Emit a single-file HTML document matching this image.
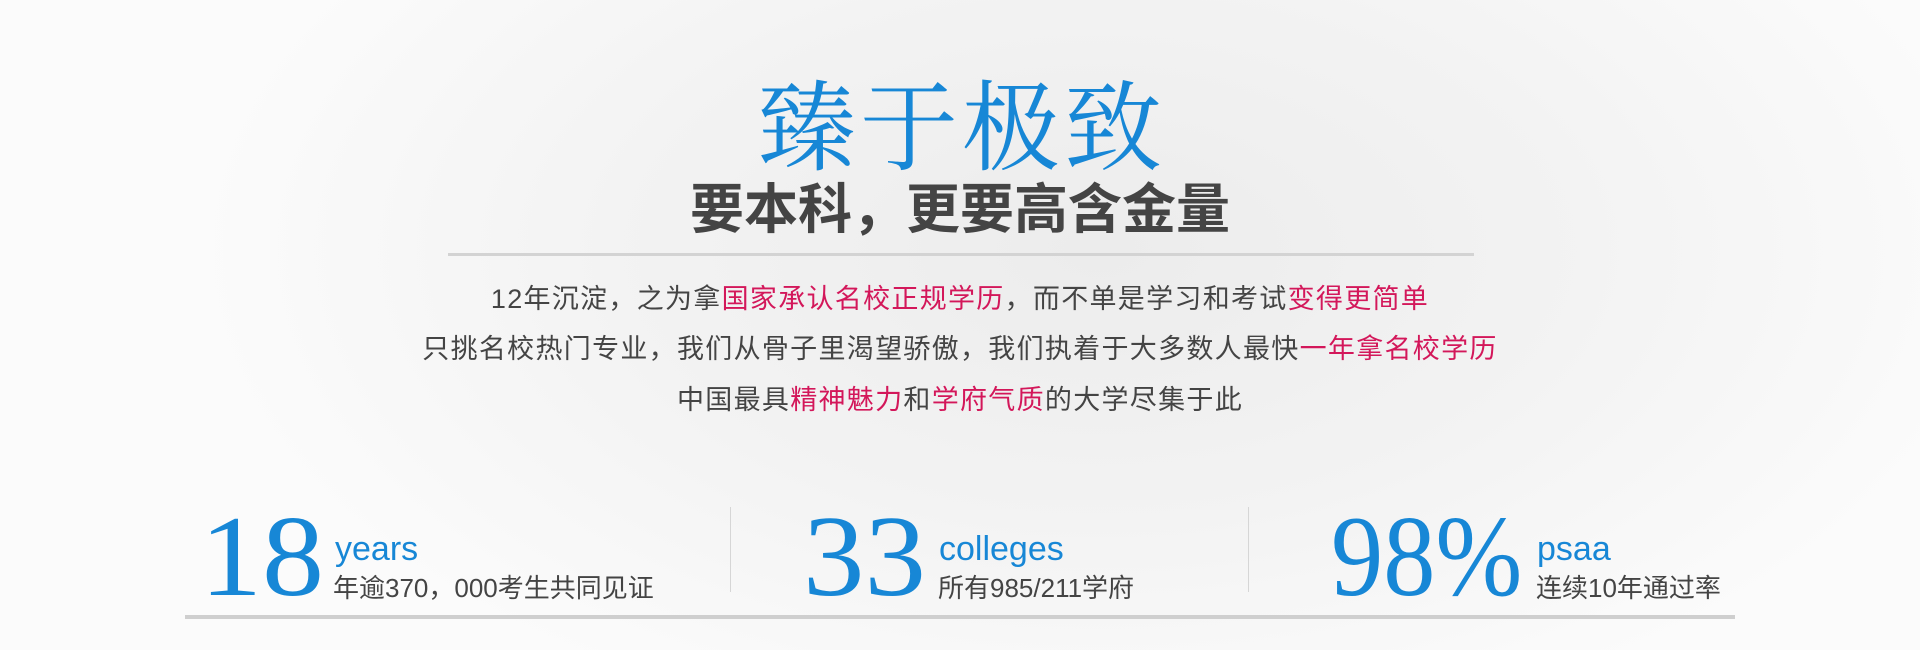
<!DOCTYPE html>
<html><head><meta charset="utf-8"><style>
html,body{margin:0;padding:0}
body{width:1920px;height:650px;position:relative;overflow:hidden;
background:radial-gradient(ellipse 900px 500px at 1100px 250px,#ececec 0%,#f3f3f3 55%,#fbfbfb 100%);
font-family:"Liberation Sans","Noto Sans CJK SC",sans-serif}
.a{position:absolute;white-space:nowrap}
.title{left:0;width:1920px;text-align:center;top:80px;font:98px/100px "Liberation Serif","Noto Serif CJK SC",serif;color:#1787d6;letter-spacing:4px;padding-left:4px;box-sizing:border-box}
.sub{left:0;width:1920px;text-align:center;top:182px;font-weight:bold;font-size:54px;line-height:56px;color:#444}
.hr{left:448px;width:1026px;top:253px;height:3px;background:#d3d3d3}
.txt{left:0;width:1920px;text-align:center;font-size:27px;line-height:30px;color:#444;letter-spacing:1.3px}
.r{color:#d3175a}
.num{font:116px/116px "Liberation Serif",serif;color:#1787d6;top:499px;transform-origin:left top}
.lab{font-size:34px;line-height:34px;color:#1787d6;top:532px}
.cn{font-size:26px;line-height:26px;color:#444;top:575px}
.sep{width:1px;background:#d6d6d6;top:507px;height:85px}
.bot{left:185px;width:1550px;top:615px;height:4px;background:#cfcfcf}
</style></head><body>
<div class="a title">臻于极致</div>
<div class="a sub">要本科，更要高含金量</div>
<div class="a hr"></div>
<div class="a txt" style="top:284px">12年沉淀，之为拿<span class="r">国家承认名校正规学历</span>，而不单是学习和考试<span class="r">变得更简单</span></div>
<div class="a txt" style="top:334px">只挑名校热门专业，我们从骨子里渴望骄傲，我们执着于大多数人最快<span class="r">一年拿名校学历</span></div>
<div class="a txt" style="top:385px">中国最具<span class="r">精神魅力</span>和<span class="r">学府气质</span>的大学尽集于此</div>

<div class="a num" style="left:200px;transform:scaleX(1.07)">18</div>
<div class="a lab" style="left:335px">years</div>
<div class="a cn" style="left:333px">年逾370，000考生共同见证</div>
<div class="a sep" style="left:730px"></div>

<div class="a num" style="left:803px;transform:scaleX(1.06)">33</div>
<div class="a lab" style="left:939px">colleges</div>
<div class="a cn" style="left:938px">所有985/211学府</div>
<div class="a sep" style="left:1248px"></div>

<div class="a num" style="left:1331px;transform:scaleX(0.9)">98%</div>
<div class="a lab" style="left:1537px">psaa</div>
<div class="a cn" style="left:1536px">连续10年通过率</div>

<div class="a bot"></div>
</body></html>
